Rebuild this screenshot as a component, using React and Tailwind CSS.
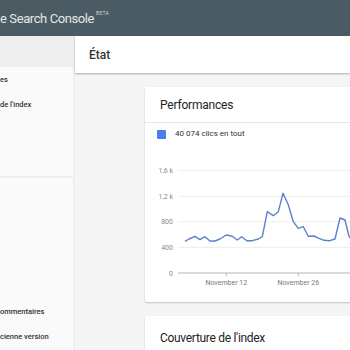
import React from "react";

const pts = [
  [40, 82.3], [44, 80], [50, 77.3], [55, 80.7], [60, 77.7], [65, 82], [70, 82], [75, 80],
  [81.3, 76], [87.3, 77.3], [92.3, 81], [96.7, 77.7], [101.7, 81.7], [107.3, 81.7], [113.3, 80],
  [117.3, 77.7], [122.3, 52.7], [128.3, 56.7], [133.3, 52.7], [138, 34.3], [143.3, 45.7],
  [148.3, 62.7], [153.3, 69.3], [158.3, 67.7], [163.3, 77.3], [169, 77], [174, 79.3],
  [179, 81.3], [184.7, 81.7], [190, 80], [195, 59], [200, 61], [204, 77.3], [210, 85],
];

function Chart() {
  const grid = [
    [11.7, "1,6 k"],
    [37.3, "1,2 k"],
    [62.7, "800"],
    [88.3, "400"],
  ];
  return (
    <svg width="210" height="130" className="block" style={{ fontFamily: "Roboto, sans-serif" }}>
      {grid.map(([y, l]) => (
        <g key={l}>
          <line x1="33" x2="210" y1={y} y2={y} stroke="#ededed" strokeWidth="1" />
          <text x="28" y={y + 2.5} textAnchor="end" fontSize="7" fill="#8a8a8a">{l}</text>
        </g>
      ))}
      <line x1="33" x2="210" y1="114" y2="114" stroke="#b5b5b5" strokeWidth="1" />
      <text x="28" y="116.5" textAnchor="end" fontSize="7" fill="#8a8a8a">0</text>
      <line x1="81.3" x2="81.3" y1="114" y2="117" stroke="#b5b5b5" />
      <line x1="153.3" x2="153.3" y1="114" y2="117" stroke="#b5b5b5" />
      <text x="81.3" y="125.8" textAnchor="middle" fontSize="7" fill="#7a7a7a">November 12</text>
      <text x="153.3" y="125.8" textAnchor="middle" fontSize="7" fill="#7a7a7a">November 26</text>
      <polyline
        points={pts.map((p) => p.join(",")).join(" ")}
        fill="none"
        stroke="#5d81c9"
        strokeWidth="1.4"
        strokeLinejoin="round"
      />
    </svg>
  );
}

export default function App() {
  return (
    <div
      className="w-[350px] h-[350px] overflow-hidden flex flex-col bg-[#f5f5f5]"
      style={{ fontFamily: "Roboto, 'Noto Sans', sans-serif" }}
    >
      <header className="h-[36px] shrink-0 bg-[#4a5b63] flex items-center">
        <span className="text-[13px] text-[#e3e7e9] leading-none tracking-[-0.4px]">e Search Console</span>
        <sup className="text-[5px] text-[#cfd6d9] ml-[2px] -mt-[6px] tracking-[0.2px]">BETA</sup>
      </header>
      <div className="flex flex-1 min-h-0">
        <aside className="w-[75px] shrink-0 bg-[#fafafa] border-r-2 border-[#efefef] flex flex-col">
          <div className="h-[33px] bg-[#eeeeee]" />
          <div className="h-[29px] flex items-center text-[7.5px] font-medium text-[#333]">es</div>
          <div className="h-[25px] flex items-center text-[7.5px] font-medium text-[#333]">de l'index</div>
          <div className="mt-[60px] h-[2px] bg-[#efefef]" />
          <div className="mt-[120px] h-[28px] flex items-center text-[7.5px] font-medium text-[#333]">ommentaires</div>
          <div className="h-[28px] flex items-center text-[7.5px] font-medium text-[#333]">cienne version</div>
        </aside>
        <main className="flex-1 min-w-0 flex flex-col">
          <div className="h-[37px] shrink-0 bg-white shadow-[0_1px_2px_rgba(0,0,0,0.3)] flex items-center pl-[14px]">
            <h1 className="text-[12px] font-medium text-[#333]">État</h1>
          </div>
          <div className="pl-[70px] pt-[14px] flex flex-col gap-[14px]">
            <section className="w-[260px] bg-white shadow-[0_1px_2px_rgba(0,0,0,0.22)] rounded-[2px]">
              <div className="h-[36px] flex items-center pl-[15px] border-b border-[#e6e6e6]">
                <h2 className="text-[12px] text-[#222] tracking-[-0.2px]">Performances</h2>
              </div>
              <div className="h-[22px] flex items-center pl-[12px] gap-[9px]">
                <span className="w-[9px] h-[9px] rounded-[1px] bg-[#4a80ee]" />
                <span className="text-[8px] text-[#333]">40 074 clics en tout</span>
              </div>
              <div className="pt-[14px] pb-[13px]">
                <Chart />
              </div>
            </section>
            <section className="w-[260px] h-[60px] bg-white shadow-[0_1px_2px_rgba(0,0,0,0.22)] rounded-[2px] pt-[13px] pl-[15px]">
              <h2 className="text-[12px] text-[#222] tracking-[-0.3px]">Couverture de l'index</h2>
            </section>
          </div>
        </main>
      </div>
    </div>
  );
}
